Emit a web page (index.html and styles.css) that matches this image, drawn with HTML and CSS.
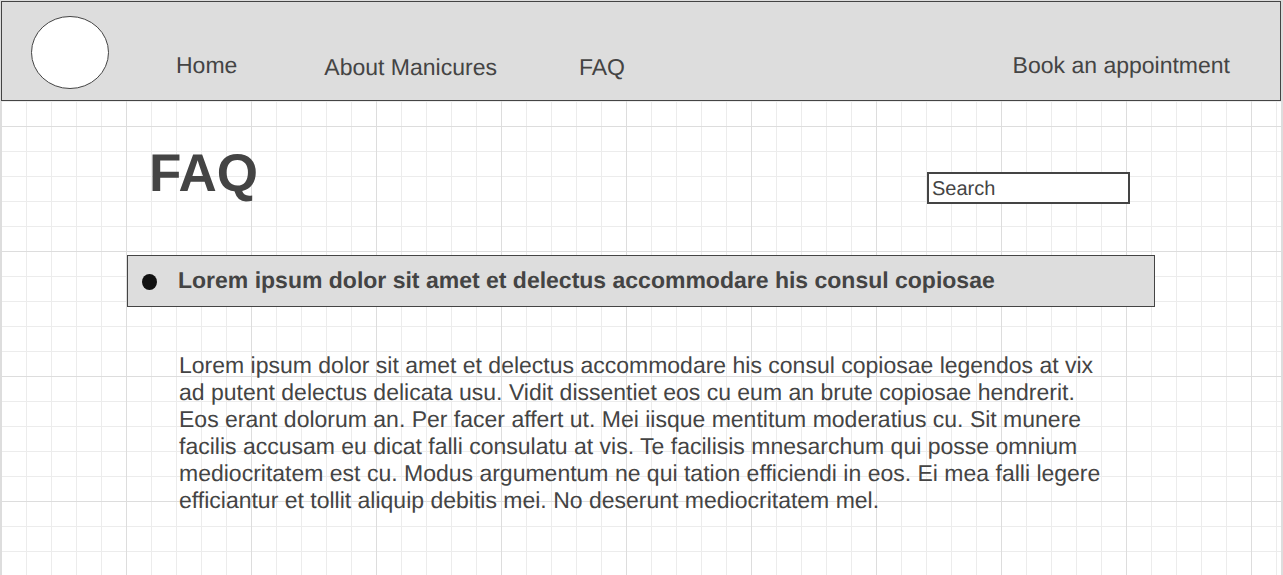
FILE: index.html
```html
<!DOCTYPE html>
<html lang="en">
<head>
<meta charset="utf-8">
<title>FAQ</title>
<link rel="stylesheet" href="styles.css">
</head>
<body>
<div class="sheet">
  <header class="topbar">
    <svg class="logo" viewBox="0 0 78 73" aria-hidden="true"><ellipse cx="39" cy="36.5" rx="38.5" ry="36"/></svg>
    <nav class="nav">
      <a class="nav-home" href="#">Home</a>
      <a class="nav-about" href="#">About Manicures</a>
      <a class="nav-faq" href="#">FAQ</a>
      <a class="nav-book" href="#">Book an appointment</a>
    </nav>
  </header>
  <main class="content">
    <div class="heading">
      <h1>FAQ</h1>
      <input class="search" type="text" placeholder="Search" aria-label="Search">
    </div>
    <section>
      <h2 class="question"><span class="bullet"></span>Lorem ipsum dolor sit amet et delectus accommodare his consul copiosae</h2>
      <p class="answer">Lorem ipsum dolor sit amet et delectus accommodare his consul copiosae legendos at vix<br>
      ad putent delectus delicata usu. Vidit dissentiet eos cu eum an brute copiosae hendrerit.<br>
      Eos erant dolorum an. Per facer affert ut. Mei iisque mentitum moderatius cu. Sit munere<br>
      facilis accusam eu dicat falli consulatu at vis. Te facilisis mnesarchum qui posse omnium<br>
      mediocritatem est cu. Modus argumentum ne qui tation efficiendi in eos. Ei mea falli legere<br>
      efficiantur et tollit aliquip debitis mei. No deserunt mediocritatem mel.</p>
    </section>
  </main>
</div>
</body>
</html>
```
FILE: styles.css
```css
* {
  box-sizing: border-box;
}

body {
  margin: 0;
  color: #444;
  font-family: "Liberation Sans", Arial, sans-serif;
  font-size: 23px;
  line-height: 27px;
  text-rendering: geometricPrecision;
}

.sheet {
  min-height: 100vh;
  padding: 1px 2px 0 1px;
  background:
    linear-gradient(#ddd, #ddd) left / 1px 100% no-repeat,
    linear-gradient(#ddd, #ddd) right / 2px 100% no-repeat,
    linear-gradient(#ddd, #ddd) top / 100% 1px no-repeat,
    linear-gradient(90deg, #ddd 1px, transparent 1px) 1px 1px / 125px 125px,
    linear-gradient(#ddd 1px, transparent 1px) 1px 1px / 125px 125px,
    linear-gradient(90deg, #ececec 1px, transparent 1px) 1px 1px / 25px 25px,
    linear-gradient(#ececec 1px, transparent 1px) 1px 1px / 25px 25px,
    #fff;
}

.topbar {
  display: flex;
  align-items: flex-start;
  padding: 14px 50px 11px 29px;
  background: #ddd;
  border: 1px solid #444;
}

.logo {
  flex: none;
  width: 78px;
  height: 73px;
  fill: #fff;
  stroke: #444;
}

.nav {
  display: flex;
  flex: 1;
  align-items: flex-start;
  padding-top: 36px;
  padding-left: 67px;
  white-space: nowrap;
}

.nav a {
  color: inherit;
  text-decoration: none;
}

.nav-about,
.nav-faq {
  padding-top: 2px;
}

.nav-about {
  margin-left: 87px;
}

.nav-faq {
  margin-left: 82px;
}

.nav .nav-book {
  margin-left: auto;
}

.content {
  margin: 0 126px;
  padding-top: 42px;
}

.heading {
  display: flex;
  align-items: flex-start;
  justify-content: space-between;
  padding: 0 25px 0 22px;
}

h1 {
  margin: 0;
  padding-top: 1px;
  font-size: 53px;
  line-height: 60px;
}

.search {
  width: 203px;
  height: 32px;
  margin-top: 29px;
  padding: 3px 3px 0;
  border: 2px solid #444;
  border-radius: 0;
  background: #fff;
  color: #444;
  font: 20px "Liberation Sans", Arial, sans-serif;
  text-rendering: inherit;
}

.search::placeholder {
  color: #444;
  opacity: 1;
}

.question {
  display: flex;
  align-items: flex-start;
  gap: 21px;
  margin: 51px 0 0;
  padding: 11px 14px 12px;
  background: #ddd;
  border: 1px solid #444;
  font-size: 23px;
}

.bullet {
  flex: none;
  width: 15px;
  height: 16px;
  margin-top: 7px;
  border-radius: 50%;
  background: #111;
}

.answer {
  margin: 45px 0 0;
  padding-left: 52px;
  white-space: nowrap;
}
```
